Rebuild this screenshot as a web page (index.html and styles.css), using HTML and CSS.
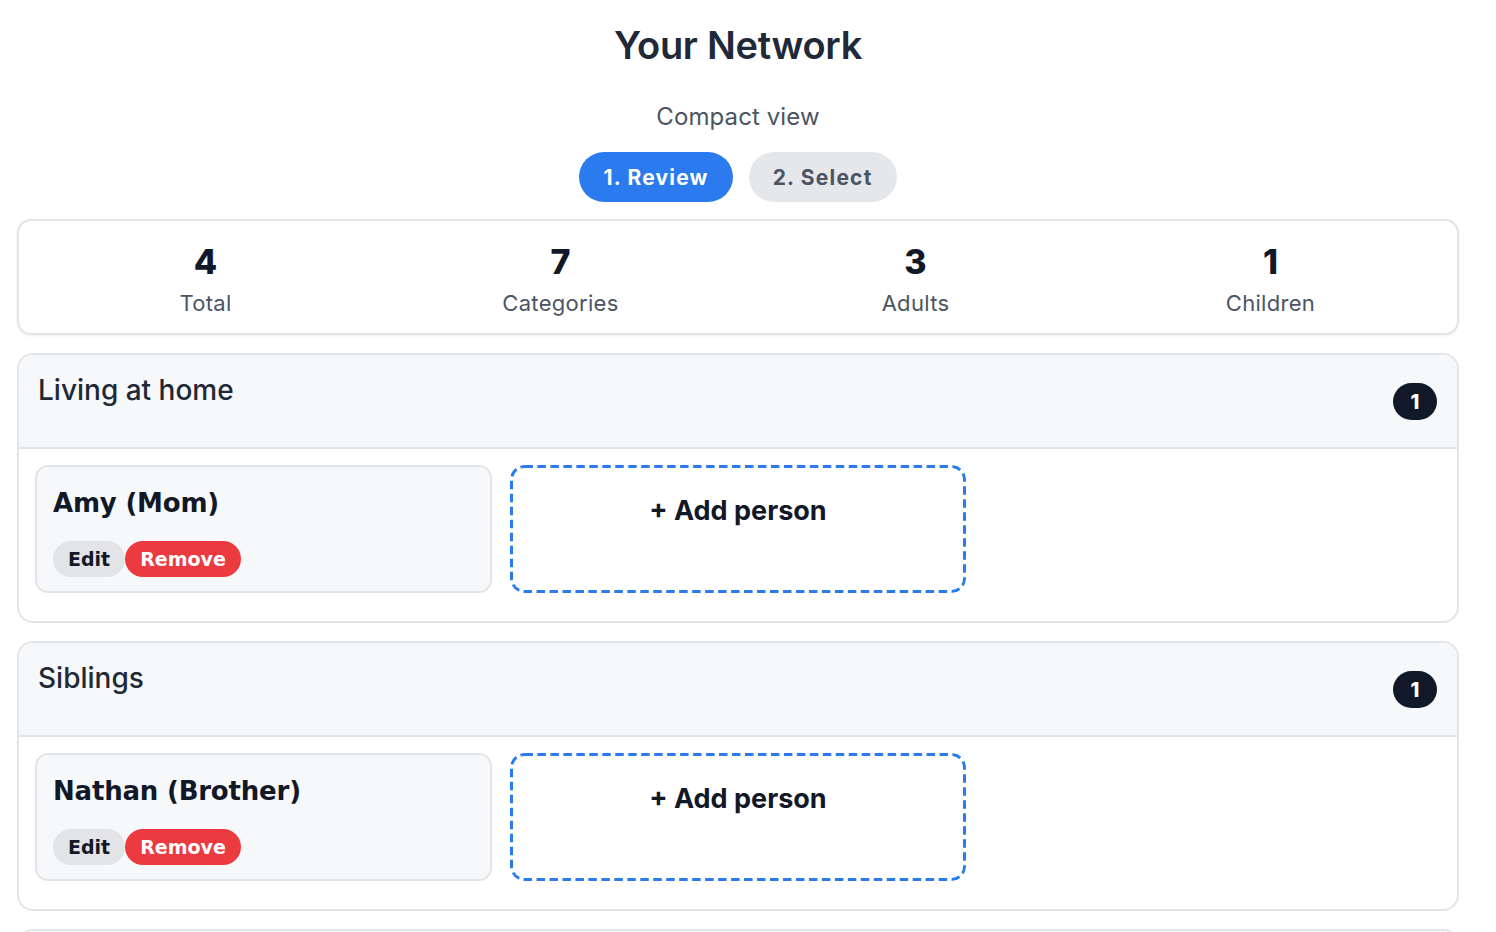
FILE: index.html
```html
<!DOCTYPE html>
<html lang="en">
<head>
<meta charset="utf-8">
<title>Your Network</title>
<link rel="stylesheet" href="styles.css">
</head>
<body>
<main class="page">
  <header class="intro">
    <h1 class="title">Your Network</h1>
    <p class="subtitle">Compact view</p>
    <nav class="steps">
      <button class="step step-active">1. Review</button>
      <button class="step">2. Select</button>
    </nav>
  </header>

  <section class="stats">
    <div class="stat"><div class="stat-num">4</div><div class="stat-label">Total</div></div>
    <div class="stat"><div class="stat-num">7</div><div class="stat-label">Categories</div></div>
    <div class="stat"><div class="stat-num">3</div><div class="stat-label">Adults</div></div>
    <div class="stat"><div class="stat-num">1</div><div class="stat-label">Children</div></div>
  </section>

  <section class="category">
    <div class="cat-head">
      <h2 class="cat-title">Living at home</h2>
      <span class="badge">1</span>
    </div>
    <div class="cat-body">
      <div class="person">
        <div class="person-name">Amy (Mom)</div>
        <div class="actions">
          <button class="btn btn-edit">Edit</button>
          <button class="btn btn-remove">Remove</button>
        </div>
      </div>
      <button class="add">+ Add person</button>
    </div>
  </section>

  <section class="category">
    <div class="cat-head">
      <h2 class="cat-title">Siblings</h2>
      <span class="badge">1</span>
    </div>
    <div class="cat-body">
      <div class="person">
        <div class="person-name">Nathan (Brother)</div>
        <div class="actions">
          <button class="btn btn-edit">Edit</button>
          <button class="btn btn-remove">Remove</button>
        </div>
      </div>
      <button class="add">+ Add person</button>
    </div>
  </section>

  <section class="category category-cut">
    <div class="cat-head"></div>
  </section>
</main>
</body>
</html>
```

FILE: styles.css
```css
* { box-sizing: border-box; }
html, body { margin: 0; padding: 0; background: #ffffff; }
body {
  font-family: Inter, "Noto Sans", "Liberation Sans", sans-serif;
  color: #1f2937;
  overflow: hidden;
}
.page {
  padding: 0 37px 0 17px;
  display: flex;
  flex-direction: column;
  gap: 18px;
}
.intro {
  display: flex;
  flex-direction: column;
  align-items: center;
  margin-bottom: -1px;
}
.title {
  margin: 20px 0 0;
  font-size: 38px;
  line-height: 50px;
  font-weight: 600;
  color: #1f2937;
  letter-spacing: -0.3px;
}
.subtitle {
  margin: 32px 0 0;
  font-size: 24px;
  line-height: 30px;
  color: #4b5563;
  letter-spacing: 0.1px;
}
.steps {
  display: flex;
  gap: 16px;
  margin-top: 20px;
}
.step {
  font-family: Inter, "Noto Sans", sans-serif;
  border: none;
  height: 50px;
  padding: 0 24px;
  border-radius: 25px;
  font-size: 21px;
  font-weight: 700;
  letter-spacing: 1.2px;
  background: #e5e7eb;
  color: #4b5563;
}
.step-active {
  background: #2b7bef;
  color: #ffffff;
}
.stats {
  border: 2px solid #e3e4e8;
  border-radius: 14px;
  box-shadow: 0 1px 3px rgba(0,0,0,0.06);
  padding: 19px 15px 11px;
  display: grid;
  grid-template-columns: repeat(4, 1fr);
  gap: 12px;
  text-align: center;
}
.stat-num {
  font-size: 34px;
  line-height: 44px;
  font-weight: 800;
  color: #111827;
}
.stat-label {
  margin-top: 0;
  font-size: 22px;
  line-height: 38px;
  letter-spacing: 0.3px;
  color: #4b5563;
}
.category {
  border: 2px solid #e3e4e8;
  border-radius: 16px;
  overflow: hidden;
}
.category-cut {
  height: 40px;
}
.cat-head {
  background: #f7f8fa;
  height: 94px;
  display: flex;
  justify-content: space-between;
  align-items: flex-start;
  padding: 16px 20px 0 19px;
  border-bottom: 2px solid #e3e4e8;
}
.cat-title {
  margin: 0;
  font-size: 28px;
  line-height: 38px;
  font-weight: 500;
  color: #1f2937;
}
.badge {
  margin-top: 12px;
  min-width: 44px;
  height: 37px;
  border-radius: 19px;
  background: #111827;
  color: #ffffff;
  font-size: 20px;
  font-weight: 800;
  display: flex;
  align-items: center;
  justify-content: center;
}
.cat-body {
  display: grid;
  grid-template-columns: repeat(3, 1fr);
  gap: 18px;
  padding: 16px 16px 28px;
}
.person {
  background: #f7f8fa;
  border: 2px solid #e3e4e8;
  border-radius: 13px;
  height: 128px;
  padding: 17px 16px 0;
}
.person-name {
  font-family: "DejaVu Sans", "Noto Sans", sans-serif;
  font-size: 26px;
  line-height: 38px;
  font-weight: 700;
  color: #111827;
  letter-spacing: -0.2px;
}
.actions {
  display: flex;
  margin-top: 19px;
}
.btn {
  font-family: "DejaVu Sans", "Noto Sans", sans-serif;
  border: none;
  height: 36px;
  padding: 0 15px;
  border-radius: 18px;
  font-size: 19px;
  font-weight: 700;
  letter-spacing: 0;
}
.btn-edit {
  background: #e3e4e8;
  color: #111827;
}
.btn-remove {
  background: #ec3a41;
  color: #ffffff;
}
.add {
  font-family: Inter, "Noto Sans", sans-serif;
  height: 128px;
  background-color: #ffffff;
  background-image: url("data:image/svg+xml,%3Csvg xmlns='http://www.w3.org/2000/svg' width='457' height='128' viewBox='0 0 457 128' preserveAspectRatio='none'%3E%3Crect x='1.5' y='1.5' width='454' height='125' rx='13' ry='13' fill='none' stroke='%232b7bef' stroke-width='3' stroke-dasharray='8.5 4.5'/%3E%3C/svg%3E");
  background-size: 100% 100%;
  background-repeat: no-repeat;
  border: none;
  border-radius: 14px;
  padding: 29px 0 0;
  display: flex;
  justify-content: center;
  align-items: flex-start;
  font-size: 27px;
  font-weight: 700;
  color: #111827;
}
```
